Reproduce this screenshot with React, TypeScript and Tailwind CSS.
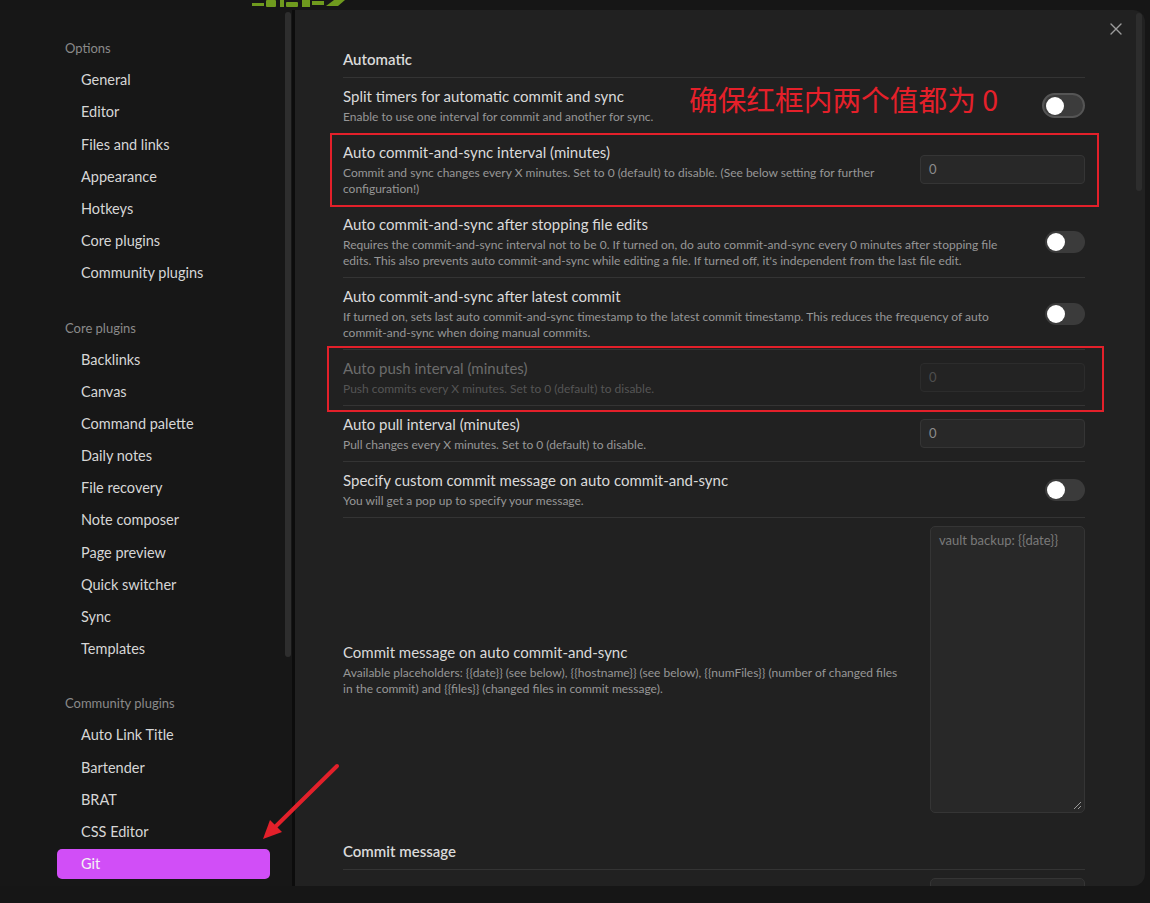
import React from "react";

const optionItems = ["General", "Editor", "Files and links", "Appearance", "Hotkeys", "Core plugins", "Community plugins"];
const coreItems = ["Backlinks", "Canvas", "Command palette", "Daily notes", "File recovery", "Note composer", "Page preview", "Quick switcher", "Sync", "Templates"];
const communityItems = ["Auto Link Title", "Bartender", "BRAT", "CSS Editor", "Git"];

function NavGroup({ title, items, last }: { title: string; items: string[]; last?: boolean }) {
  return (
    <div className={last ? "" : "mb-[24px]"}>
      <div className="h-[30px] flex items-center pl-[8px] text-[13px] text-[#8a8a8a]">{title}</div>
      {items.map((it) => (
        <div key={it} className="py-[1px]">
          <div
            className={
              "h-[30.2px] flex items-center pl-[24px] rounded-[5px] text-[14.5px] " +
              (it === "Git" ? "bg-[#d14ef7] text-[#f4f4f4]" : "text-[#d6d6d6]")
            }
          >
            {it}
          </div>
        </div>
      ))}
    </div>
  );
}

function Toggle({ big }: { big?: boolean }) {
  if (big) {
    return (
      <div className="w-[43px] h-[25px] rounded-full bg-[#3c3c3c] border-[2px] border-[#555555] flex items-center px-[2px] shrink-0">
        <div className="w-[18px] h-[18px] rounded-full bg-white" />
      </div>
    );
  }
  return (
    <div className="w-[40px] h-[22px] rounded-full bg-[#3b3b3b] flex items-center px-[2px] shrink-0">
      <div className="w-[18px] h-[18px] rounded-full bg-white" />
    </div>
  );
}

function NumInput({ dim }: { dim?: boolean }) {
  return (
    <div
      className={
        "w-[165px] h-[29px] rounded-[4px] border flex items-center pl-[8px] text-[13px] shrink-0 " +
        (dim ? "bg-[#232323] border-[#2c2c2c] text-[#4e4e4e]" : "bg-[#282828] border-[#353535] text-[#8c8c8c]")
      }
    >
      0
    </div>
  );
}

function Row({
  name,
  desc,
  control,
  dim,
  border = true,
}: {
  name: string;
  desc: string[];
  control: React.ReactNode;
  dim?: boolean;
  border?: boolean;
}) {
  return (
    <div className={"flex items-center justify-between pt-[8px] pb-[8px] " + (border ? "border-b border-[#343434]" : "")}>
      <div className="flex flex-col">
        <div className={"h-[20px] leading-[20px] text-[15px] whitespace-nowrap " + (dim ? "text-[#6c6c6c]" : "text-[#dadada]")}>{name}</div>
        <div className="mt-[3px]">
          {desc.map((d, i) => (
            <div key={i} className={"h-[16px] leading-[16px] text-[12px] whitespace-nowrap " + (dim ? "text-[#555555]" : "text-[#979797]")}>
              {d}
            </div>
          ))}
        </div>
      </div>
      {control}
    </div>
  );
}

function Heading({ text }: { text: string }) {
  return (
    <div className="border-b border-[#343434] pb-[8px] pt-[20px]">
      <div className="h-[20px] leading-[20px] text-[15px] font-semibold text-[#dadada]">{text}</div>
    </div>
  );
}

export default function App() {
  return (
    <div className="relative w-[1150px] h-[903px] overflow-hidden bg-[#161616] font-['Lato',sans-serif]">
      {/* cut-off green logo above the modal */}
      <svg className="absolute left-[250px] top-0" width="100" height="10" viewBox="0 0 100 10">
        <rect x="2" y="3" width="12" height="3" fill="#6f9a1e" />
        <rect x="16" y="0" width="10" height="7" rx="1" fill="#6f9a1e" />
        <rect x="30" y="0" width="4" height="7" fill="#6f9a1e" />
        <rect x="36" y="2" width="12" height="5" rx="1" fill="#6f9a1e" />
        <rect x="52" y="0" width="8" height="7" fill="#6f9a1e" />
        <rect x="62" y="1" width="12" height="4" fill="#6f9a1e" />
        <path d="M76 6 L88 6 L95 0 L84 0 Z" fill="#6f9a1e" />
      </svg>

      <div className="pt-[10px] flex">
        <div className="flex h-[876px] w-[1145px]">
          {/* sidebar */}
          <div className="w-[285px] bg-[#171717] pt-[24px] pl-[57px] pr-[15px]">
            <NavGroup title="Options" items={optionItems} />
            <NavGroup title="Core plugins" items={coreItems} />
            <NavGroup title="Community plugins" items={communityItems} last />
          </div>
          <div className="w-[7px] bg-[#171717] pt-[2px]">
            <div className="w-[6px] h-[645px] rounded-full bg-[#2e2e2e]" />
          </div>
          <div className="w-[3px] bg-[#0c0c0c]" />

          {/* content */}
          <div className="relative flex-1 flex bg-[#212121] rounded-r-[12px] overflow-hidden">
            <div className="flex-1 pl-[48px] pr-[51px] pt-[19px]">
              <Heading text="Automatic" />
              <Row
                name="Split timers for automatic commit and sync"
                desc={["Enable to use one interval for commit and another for sync."]}
                control={<Toggle big />}
              />
              <Row
                name="Auto commit-and-sync interval (minutes)"
                desc={[
                  "Commit and sync changes every X minutes. Set to 0 (default) to disable. (See below setting for further",
                  "configuration!)",
                ]}
                control={<NumInput />}
              />
              <Row
                name="Auto commit-and-sync after stopping file edits"
                desc={[
                  "Requires the commit-and-sync interval not to be 0. If turned on, do auto commit-and-sync every 0 minutes after stopping file",
                  "edits. This also prevents auto commit-and-sync while editing a file. If turned off, it's independent from the last file edit.",
                ]}
                control={<Toggle />}
              />
              <Row
                name="Auto commit-and-sync after latest commit"
                desc={[
                  "If turned on, sets last auto commit-and-sync timestamp to the latest commit timestamp. This reduces the frequency of auto",
                  "commit-and-sync when doing manual commits.",
                ]}
                control={<Toggle />}
              />
              <Row
                name="Auto push interval (minutes)"
                desc={["Push commits every X minutes. Set to 0 (default) to disable."]}
                control={<NumInput dim />}
                dim
              />
              <Row
                name="Auto pull interval (minutes)"
                desc={["Pull changes every X minutes. Set to 0 (default) to disable."]}
                control={<NumInput />}
              />
              <Row
                name="Specify custom commit message on auto commit-and-sync"
                desc={["You will get a pop up to specify your message."]}
                control={<Toggle />}
              />
              <Row
                name="Commit message on auto commit-and-sync"
                desc={[
                  "Available placeholders: {{date}} (see below), {{hostname}} (see below), {{numFiles}} (number of changed files",
                  "in the commit) and {{files}} (changed files in commit message).",
                ]}
                border={false}
                control={
                  <div className="relative w-[155px] h-[287px] rounded-[5px] bg-[#282828] border border-[#353535] pl-[8px] pt-[4px] text-[13px] text-[#7a7a7a] shrink-0">
                    vault backup: {"{{date}}"}
                    <svg className="absolute right-[2px] bottom-[2px]" width="9" height="9" viewBox="0 0 9 9">
                      <path d="M8 1 L1 8 M8 5 L5 8" stroke="#9a9a9a" strokeWidth="1" />
                    </svg>
                  </div>
                }
              />
              <Heading text="Commit message" />
              <div className="flex justify-end pt-[8px]">
                <div className="w-[155px] h-[30px] rounded-[5px] bg-[#282828] border border-[#353535] pl-[8px] pt-[4px] text-[13px] text-[#7a7a7a]">
                  vault backup: {"{{date}}"}
                </div>
              </div>
            </div>
            <div className="w-[9px] pt-[3px]">
              <div className="w-[6px] h-[178px] rounded-full bg-[#2d2d2d]" />
            </div>

            {/* close button */}
            <svg className="absolute right-[23px] top-[13px]" width="12" height="12" viewBox="0 0 12 12">
              <path d="M1 1 L11 11 M11 1 L1 11" stroke="#9c9c9c" strokeWidth="1.4" strokeLinecap="round" />
            </svg>
          </div>
        </div>
      </div>

      {/* annotations */}
      <div className="absolute left-[689px] top-[79px] text-[28.7px] leading-[40px] text-[#e5202a] font-['Noto_Sans_CJK_SC',sans-serif]">
        确保红框内两个值都为 0
      </div>
      <div className="absolute left-[330px] top-[133px] w-[769px] h-[74px] border-[2px] border-[#e3202a]" />
      <div className="absolute left-[327px] top-[346px] w-[777px] h-[66px] border-[2px] border-[#e3202a]" />
      <svg className="absolute left-0 top-0 pointer-events-none" width="1150" height="903">
        <line x1="337" y1="766" x2="272" y2="830" stroke="#e3202a" strokeWidth="4" strokeLinecap="round" />
        <polygon points="263,839 270,820 282,832" fill="#e3202a" />
      </svg>
    </div>
  );
}
